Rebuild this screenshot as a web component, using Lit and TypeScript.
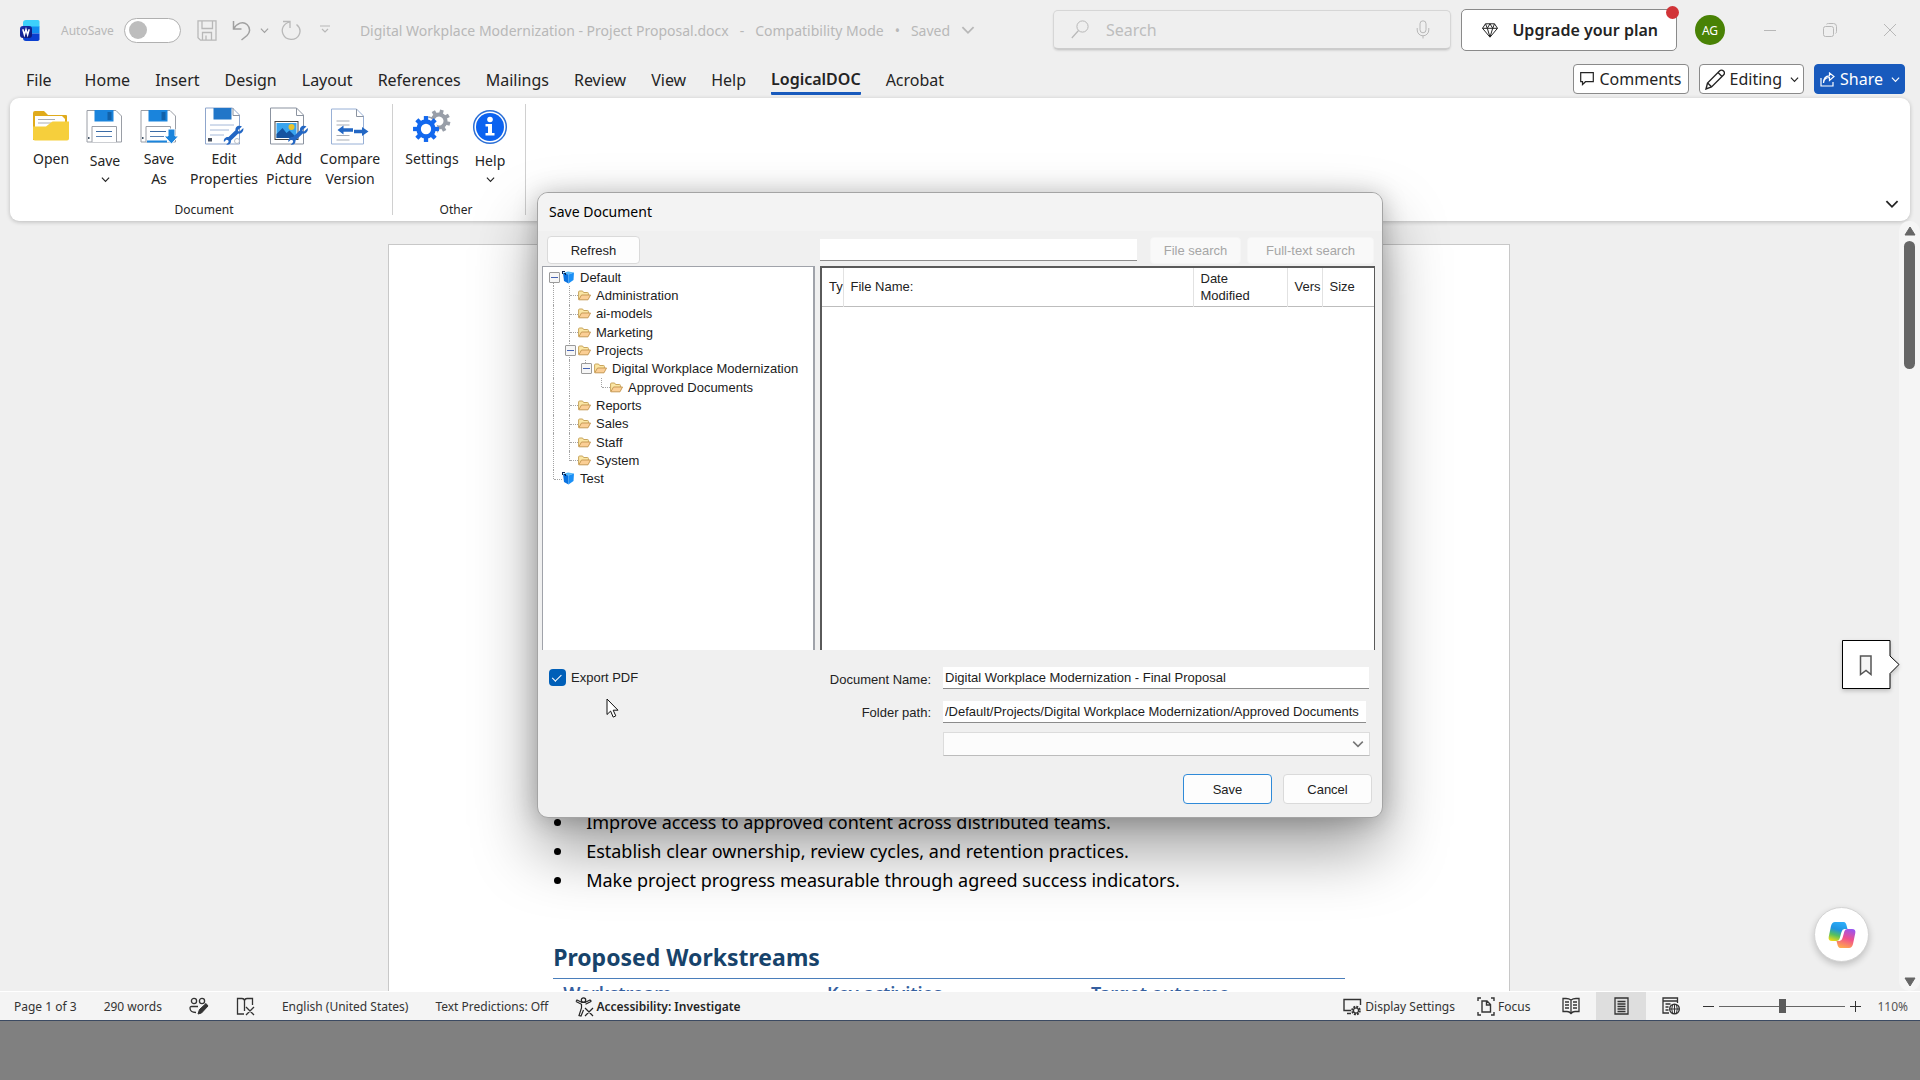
import { LitElement, html, css, svg, nothing, TemplateResult } from "lit";
import { customElement } from "lit/decorators.js";
import { classMap } from "lit/directives/class-map.js";

const chevron = (size = 10) => html`<svg class="chev" width=${size} height=${size} viewBox="0 0 10 10" aria-hidden="true">
  <path d="M1 3 L5 7 L9 3" fill="none" stroke="currentColor" stroke-width="1.3" /></svg>`;

const icon = (w: number, h: number, body: TemplateResult | unknown) => html`<svg
  width=${w} height=${h} viewBox="0 0 ${w} ${h}" fill="none" stroke="currentColor" aria-hidden="true">${body}</svg>`;

const wordLogo = icon(20, 21, svg`
  <defs><linearGradient id="wb" x1="0" y1="0" x2="1" y2="1"><stop offset="0" stop-color="#1a2fb0"/><stop offset="1" stop-color="#0b1673"/></linearGradient></defs>
  <g stroke="none"><path d="M3 3a3 3 0 0 1 3-3h12a1.500 1.500 0 0 1 1.500 1.500V7H3z" fill="#3dd0fb"/>
  <path d="M3 10a3.500 3.500 0 0 1 3.500-3.500h13v7H3z" fill="#118df0"/>
  <path d="M3 17a3.500 3.500 0 0 1 3.500-3.500h13v5A2 2 0 0 1 17.500 21H6a3 3 0 0 1-3-3z" fill="#0a3fd0"/>
  <rect x="0" y="6" width="12" height="12" rx="3" fill="url(#wb)"/></g>
  <path d="M2.800 9.200l1.600 5.600L6 9.600l1.600 5.200 1.600-5.600" stroke="#fff" stroke-width="1.500"/>`);

const saveIcon = icon(20, 21, svg`<path d="M1 .8h18v19.400H3.500L1 17.700zM5 1v7.500h10.500V1M5.500 20v-7.500h9V20M9 20v-4.500" stroke-width="1.300"/>`);
const undoIcon = icon(20, 21, svg`<path d="M1.500 1v8h8M1.500 9C5 3 11 .8 15 4.500s3 8 0 11L9.500 20" stroke-width="1.500"/>`);
const redoIcon = icon(21, 21, svg`<path d="M2 1.500h7v6.500M8.500 2C2 4 0 9.500 2 14c3 7 13 7 16 1 2-4 .5-8-2.500-10.500" stroke-width="1.300"/>`);
const customIcon = icon(10, 10, svg`<path d="M0 1h10M2 4l3 3 3-3" stroke-width="1.200"/>`);
const searchIcon = icon(18, 19, svg`<circle cx="11.500" cy="6.500" r="5.600"/><path d="M7.500 10.500L.8 18" stroke-width="1.200"/>`);
const micIcon = icon(14, 19, svg`<rect x="4" y=".8" width="6" height="12" rx="3"/><path d="M1.200 8v2a5.800 5.800 0 0 0 11.600 0V8M7 15.800V18.500"/>`);
const gemIcon = icon(16, 15, svg`<path d="M3.500.8h9l3 4.500L8 14.200.5 5.300zM.5 5.300h15M3.500.8L5.300 5.300 8 14l2.700-8.700L12.500.8M8 .8L5.300 5.300M8 .8l2.700 4.500"/>`);
const minIcon = icon(14, 14, svg`<path d="M1 7.500h12"/>`);
const restoreIcon = icon(14, 14, svg`<rect x=".5" y="3.500" width="10" height="10" rx="2"/><path d="M3.500 1.200Q4 .5 5.500.5h5a3 3 0 0 1 3 3v5q0 1.500-1 2"/>`);
const closeIcon = icon(14, 14, svg`<path d="M1 1l12 12M13 1L1 13"/>`);
const commentIcon = icon(14, 14, svg`<path d="M.7.7h12.600v9H5.500L2.500 12.500V9.700H.7z" stroke-width="1.200"/>`);
const pencilIcon = icon(20, 21, svg`<path d="M1 20l1.500-6L14.500 2a2.600 2.600 0 0 1 4 4L6.500 18zM13 3.500l4 4M2.700 14l4 4" stroke-width="1.400"/>`);
const shareIcon = icon(15, 15, svg`<path d="M1 6v8h12v-4M3.500 11C4 7 6 5.500 9.500 5.500V8.500L14 4.500 9.500 1v2.800C5.500 4 3.500 7 3.500 11z" stroke-width="1.200"/>`);

const wrench = (x: number, y: number) => svg`<g transform="translate(${x} ${y})" stroke="none"><path d="M18.500 1.500l-4 3.500.3 1.200 1.200.3L19.800 3c.6 3-1.500 6-5 5.600L7.500 15.500c.4 3-2 4.800-4.800 4.200L5.200 17l-.5-1.800-1.900-.4L.5 17c-.8-3 1.500-5.500 4.500-5L12 5.200c-.5-3.500 3-5.700 6.500-3.700z" fill="#2367c4"/></g>`;

const openPic = icon(38, 38, svg`<g stroke="none"><path d="M1 5q0-2 2-2h9l4 4h18q1 0 1 1v24H1z" fill="#e0ab1c"/>
  <path d="M3 8h27l3 3v8H3z" fill="#fff"/><path d="M6 11.500h17M6 15h13" stroke="#a9adb3" stroke-width="1.200"/>
  <path d="M1 18.500h13l5-4q1-1 2-1h16v17q0 2-2 2H3q-2 0-2-2z" fill="#f6cf3c"/></g>`);
const floppy = svg`<path d="M1 2.500h29l5.500 5.500v26h-34.500z" fill="#fff" stroke="#9a9ea6"/><rect x="8.500" y="2" width="19" height="11.500" fill="#1a84dc" stroke="none"/><rect x="21.500" y="4" width="4" height="8" fill="#1261a8" stroke="none"/>
  <path d="M6 34V18.500h24.500V34" fill="#fff" stroke="#9a9ea6"/><path d="M10 23.500h16" stroke="#3a6ba6"/><path d="M10 28.500h16" stroke="#5680b4"/><rect x="2" y="29" width="1.500" height="2" fill="#456" stroke="none"/>`;
const savePic = icon(38, 38, floppy);
const saveAsPic = icon(38, 38, svg`${floppy}<path d="M7 33.500h20" stroke="#1a84dc" stroke-width="2"/><path d="M28 21h7v7h3.500L31.500 36 24 28h4z" fill="#1a84dc" stroke="#fff"/>`);
const sheet = svg`<path d="M1.500 1h26l7 7v29h-33z" fill="#fff" stroke="#8b93a0"/><path d="M27.500 1v7.500h7" stroke="#8b93a0"/>`;
const editPic = icon(40, 40, svg`<path d="M1.500 1h27l7 7v29h-34z" fill="#fff" stroke="#8fa6cc"/><path d="M29 1v7.500h6.500" stroke="#8b93a0"/><rect x="9.500" y="1" width="18" height="11.500" fill="#2176c8" stroke="none"/>
  <path d="M6 18h24M6 23h19M6 28h14" stroke="#a4b8d8"/><rect x="4" y="31" width="4" height="3.500" fill="#4b5360" stroke="none"/><circle cx="33" cy="34" r="2.500" stroke="#b9bfc8"/>${wrench(19.500, 18)}`);
const addPic = icon(40, 40, svg`${sheet}<rect x="6" y="14.500" width="23" height="18" fill="#fff" stroke="#444"/><rect x="7.500" y="16" width="20" height="15" fill="#38a4ee" stroke="none"/><circle cx="22.500" cy="20" r="3" fill="#e9c32c" stroke="none"/>
  <path d="M7.500 31V27l6-6 4 5 3-2.500 7 7V31z" fill="#1553a0" stroke="none"/>${wrench(19, 18)}`);
const comparePic = icon(40, 40, svg`<path d="M1.500 2h25l7 7v28h-32z" fill="#fff" stroke="#98b0d6"/><path d="M26.500 2v7.500h7" stroke="#8b93a0"/>
  <path d="M6.500 14h13M6.500 18h13M6.500 28.500h13M6.500 33h13" stroke="#a8adb6"/><path d="M7.500 23l6-4.500v2.800H23v3.400h-9.500v2.800z" fill="#2367c4" stroke="none"/><path d="M38.500 24.500L32 20v2.800h-8v3.400h8V29z" fill="#2367c4" stroke="none"/>`);
const gear = (cx: number, cy: number, r: number, color: string, rot: number) => svg`<g transform="translate(${cx} ${cy}) rotate(${rot})">
  <circle r=${r * 0.62} stroke=${color} stroke-width=${r * 0.38}/>
  ${[0, 45, 90, 135, 180, 225, 270, 315].map((a) => svg`<rect x=${-r * 0.18} y=${-r * 1.08} width=${r * 0.36} height=${r * 0.36} fill=${color} stroke="none" transform="rotate(${a})"/>`)}</g>`;
const settingsPic = icon(40, 38, svg`${gear(27, 13, 10.500, "#989ea8", 15)}<circle cx="14" cy="21" r="11.500" fill="#fff" stroke="none"/>${gear(14, 21, 12, "#1268ee", 0)}`);
const helpPic = icon(36, 36, svg`<circle cx="18" cy="18" r="16.300" fill="#fff" stroke="#2b6fd6" stroke-width="1.500"/><circle cx="18" cy="18" r="14" fill="#0b62f0" stroke="none"/>
  <circle cx="18" cy="10.500" r="2.800" fill="#fff" stroke="none"/><path d="M13.500 15h6.500v9h2.500v2.500h-9V24H16v-6.500h-2.500z" fill="#fff" stroke="none"/>`);

const proofIcon = icon(20, 20, svg`<circle cx="5" cy="4" r="2.600" stroke-width="1.300"/><circle cx="13" cy="4" r="2.600" stroke-width="1.300"/><path d="M9 9.500H2.500q-1.500 0-1.500 1.500c0 3 2 4.500 6 4.500" stroke-width="1.300"/><path d="M9 17l1.500-4.500 6.500-6 2 2.500-6.500 7z" fill="currentColor"/>`);
const bookXIcon = icon(19, 19, svg`<path d="M8 17H1.500V1.500H6q2 0 2.500 2V14M8.500 3.500q.5-2 2.500-2h5.500V8M10 10l8 8M18 10l-8 8" stroke-width="1.300"/>`);
const a11yIcon = icon(19, 20, svg`<circle cx="8.500" cy="3" r="2.200" stroke-width="1.300"/><path d="M1 4.500l5.500 2.800V11L4 18.500 6 19l2.500-6M16 4.500l-5.500 2.800M1 4.500L2 3l5 2.500h3L15 3l1.500 1.500M10 11l8 8M18 11l-8 8" stroke-width="1.200"/>`);
const displayIcon = icon(19, 19, svg`<path d="M8 13.500H1v-11h16.500V8M4 16.500h4" stroke-width="1.400"/><circle cx="13" cy="13.500" r="3.600" stroke-width="2.400" stroke-dasharray="1.800 1"/><circle cx="13" cy="13.500" r="2.500" stroke-width="1.200"/>`);
const focusIcon = icon(18, 19, svg`<path d="M4 1H1v3M14 1h3v3M4 18H1v-3M14 18h3v-3M5 4h5l3.500 3.500V15H5zM9.500 4v4h4" stroke-width="1.400"/>`);
const readIcon = icon(18, 18, svg`<path d="M9 3Q7 1.500 4 1.500H1v13h4q2.500 0 4 2 1.500-2 4-2h4v-13h-3Q11 1.500 9 3zM9 3v13M3 5h4M3 8h4M3 11h4M11 5h4M11 8h4M11 11h4" stroke-width="1.300"/>`);
const printIcon = icon(15, 18, svg`<path d="M1 1h13v16H1zM3.500 4.500h8M3.500 7h8M3.500 9.500h8M3.500 12h8M3.500 14.500h8" stroke-width="1.300"/>`);
const webIcon = icon(18, 18, svg`<path d="M7 16H1V1h14.500v5M1 4h14M3.500 7h5M3.500 10h3M3.500 13h3" stroke-width="1.300"/><circle cx="12.500" cy="12" r="4.800" stroke-width="1.400"/><path d="M8 12h9M12.500 7v10M10.500 8q-1.500 4 0 8M14.500 8q1.500 4 0 8"/>`);
const bookmarkIcon = icon(14, 21, svg`<path d="M1.500 1h10.500v18.500L7 15.500l-5.500 4z" fill="#f6f6f6" stroke="#555" stroke-width="1.500"/>`);
const copilotIcon = icon(28, 26, svg`<defs>
  <linearGradient id="ca" x1="0.600" y1="0" x2="0.300" y2="1"><stop offset="0" stop-color="#2cacf8"/><stop offset=".4" stop-color="#1f94e0"/><stop offset=".7" stop-color="#55c060"/><stop offset="1" stop-color="#e8d81c"/></linearGradient>
  <linearGradient id="cb" x1="0.600" y1="0" x2="0.300" y2="1"><stop offset="0" stop-color="#ffa650"/><stop offset=".5" stop-color="#f0508c"/><stop offset="1" stop-color="#9a55f0"/></linearGradient></defs>
  <g stroke="none"><path d="M7 0h8.500c2 0 2.800 2 3.200 4l.8 3h-3q-2.200 0-3 3l-2 7q-.7 2-3 2H4Q0 19 .7 15L3 4Q4 0 7 0z" fill="url(#ca)"/>
  <path transform="rotate(180 14 13)" d="M7 0h8.500c2 0 2.800 2 3.200 4l.8 3h-3q-2.200 0-3 3l-2 7q-.7 2-3 2H4Q0 19 .7 15L3 4Q4 0 7 0z" fill="url(#cb)"/></g>`);
const cubeIcon = icon(13, 13, svg`<g stroke="none"><path d="M1 2l5-1.500L12 1.500 6.500 3.500z" fill="#55b8f8"/><path d="M1 2l5.500 1.500V12.500L2 10z" fill="#0a72e0"/><path d="M12 1.500L6.500 3.500v9L11.500 9z" fill="#1b90f6"/><path d="M0 0h3v1H1v2H0zM2 2h2v2H3V3H2z" fill="#0b2450"/></g>`);
const folderIcon = icon(13, 11, svg`<path d="M.6 9.500V2q0-1 1-1h3l1 1.500h4q.8 0 .8 1V5" fill="#fbe6a4" stroke="#c9a55c"/><path d="M.8 9.800L3.500 5h9L10 9.800z" fill="#fbcf96" stroke="#c79a56"/>`);
const cursorIcon = icon(14, 21, svg`<path d="M1 1v15.500l3.600-3.400 2.600 6 2.600-1.200-2.600-5.700H12z" fill="#fff" stroke="#111"/>`);

interface Tool { label: string[]; pic: TemplateResult; size: string; menu?: boolean }
interface Group { name: string; tools: Tool[] }

const groups: Group[] = [
  { name: "Document", tools: [
    { label: ["Open"], pic: openPic, size: "s" },
    { label: ["Save"], pic: savePic, size: "s", menu: true },
    { label: ["Save", "As"], pic: saveAsPic, size: "s" },
    { label: ["Edit", "Properties"], pic: editPic, size: "l" },
    { label: ["Add", "Picture"], pic: addPic, size: "s" },
    { label: ["Compare", "Version"], pic: comparePic, size: "m" },
  ] },
  { name: "Other", tools: [
    { label: ["Settings"], pic: settingsPic, size: "m" },
    { label: ["Help"], pic: helpPic, size: "xs", menu: true },
  ] },
];

const tabs = ["File", "Home", "Insert", "Design", "Layout", "References", "Mailings", "Review", "View", "Help", "LogicalDOC", "Acrobat"];

/* Guide cells per row: v = line, t = tee, l = corner, b = box, e = empty */
interface Node { name: string; guides: string[]; root?: boolean }
const tree: Node[] = [
  { name: "Default", guides: ["b first"], root: true },
  { name: "Administration", guides: ["v", "t"] },
  { name: "ai-models", guides: ["v", "t"] },
  { name: "Marketing", guides: ["v", "t"] },
  { name: "Projects", guides: ["v", "b"] },
  { name: "Digital Workplace Modernization", guides: ["v", "v", "b last"] },
  { name: "Approved Documents", guides: ["v", "v", "e", "l"] },
  { name: "Reports", guides: ["v", "t"] },
  { name: "Sales", guides: ["v", "t"] },
  { name: "Staff", guides: ["v", "t"] },
  { name: "System", guides: ["v", "l"] },
  { name: "Test", guides: ["l"], root: true },
];

const reset = css`
  * { box-sizing: border-box; }
  button, input, select { font: inherit; color: inherit; margin: 0; padding: 0; border: 0; background: none; }
  svg { display: block; flex: none; }
  ul { list-style: none; margin: 0; padding: 0; }
`;

@customElement("word-header")
class WordHeader extends LitElement {
  static styles = [reset, css`
    :host { display: block; color: #242424; font-size: 16px; }
    .title { display: flex; align-items: center; height: 60px; padding: 0 23px 0 20px; color: #b8b8b8; font-size: 14px; }
    .auto { display: flex; align-items: center; gap: 10px; margin-left: 21px; font-size: 12px; }
    .toggle { appearance: none; width: 57px; height: 25px; border: 1px solid #b0b0b0; border-radius: 13px; background: #fff; display: flex; align-items: center; padding-left: 4px; }
    .toggle::before { content: ""; width: 18px; height: 18px; border-radius: 50%; background: #bdbdbd; }
    .quick { display: flex; align-items: center; margin-left: 16px; }
    .quick button { display: flex; align-items: center; }
    .undo { margin-left: 15px; gap: 8px; color: #a0a0a0; }
    .redo { margin-left: 12px; }
    .custom { margin-left: 18px; }
    .doc { display: flex; align-items: center; gap: 11px; margin-left: 30px; white-space: pre; }
    .saved { display: flex; align-items: center; gap: 7px; }
    .search { display: flex; align-items: center; width: 398px; height: 40px; margin-left: auto; padding: 0 20px 0 17px; border: 1px solid #d6d6d6; border-bottom: 2px solid #cccccc; border-radius: 5px; font-size: 16px; box-shadow: 0 1px 2px #0000001a; }
    .search input { flex: 1; min-width: 0; margin-left: 17px; outline: none; }
    .search input::placeholder { color: #bdbdbd; }
    .upgrade { position: relative; display: flex; align-items: center; justify-content: space-between; width: 216px; height: 42px; margin-left: 10px; padding: 0 18px 0 20px; border: 1px solid #8a8a8a; border-radius: 5px; background: #fff; color: #242424; font-size: 16px; font-weight: 600; }
    .dot { position: absolute; right: -3px; top: -4px; width: 13px; height: 13px; border-radius: 50%; background: #d13438; }
    .avatar { width: 30px; height: 30px; margin-left: 18px; border-radius: 50%; background: #498205; color: #fff; font-size: 12px; }
    .win { display: flex; gap: 46px; margin-left: 38px; }
    .nav { display: flex; align-items: center; height: 38px; padding: 0 15px 0 13px; }
    .tabs { display: flex; }
    .tabs button { height: 32px; padding: 2px 12px 0 13px; }
    .tabs button:first-child { margin-right: 8px; }
    .tabs .on { font-weight: 600; }
    .tabs .on span { display: block; height: 29px; padding-top: 2px; border-bottom: 3px solid #185abd; border-radius: 1px; }
    .acts { display: flex; gap: 10px; margin-left: auto; }
    .acts button { display: flex; align-items: center; height: 30px; padding: 0 6px; gap: 5px; border: 1px solid #8a8a8a; border-radius: 4px; background: #fff; }
    .acts .edit { padding: 0 4px 0 5px; }
    .acts .share { background: #185abd; border-color: #185abd; color: #fff; padding: 0 4px 0 5px; }
    .acts .chev { margin-left: 3px; }
    .ribbon { display: flex; margin: 0 10px; height: 123px; background: #fff; border-radius: 9px; box-shadow: 0 1px 4px #00000038; padding-right: 11px; }
    .group { display: flex; flex-direction: column; margin: 6px 0; padding: 0 8px 0 14px; border-right: 1px solid #d0d0d0; }
    .group + .group { padding: 0 11px 0 5px; }
    .tools { display: flex; flex: 1; }
    .tools button { display: flex; flex-direction: column; align-items: center; padding-top: 4px; font-size: 14px; line-height: 20px; }
    .pic { height: 38px; display: flex; align-items: center; margin-bottom: 3px; }
    .xs { width: 48px; } .s { width: 54px; } .m { width: 68px; } .l { width: 76px; }
    .menu .pic { margin-bottom: 5px; }
    .menu .chev { margin-top: 4px; }
    .name { text-align: center; font-size: 12px; line-height: 20px; margin-bottom: -5px; height: 20px; }
    .fold { margin: auto 0 10px auto; }
  `];
  render() {
    return html`
      <div class="title">
        ${wordLogo}
        <label class="auto">AutoSave <input class="toggle" type="checkbox" role="switch" /></label>
        <div class="quick">
          <button aria-label="Save">${saveIcon}</button>
          <button class="undo" aria-label="Undo">${undoIcon}${chevron(9)}</button>
          <button class="redo" aria-label="Redo">${redoIcon}</button>
          <button class="custom" aria-label="Customize toolbar">${customIcon}</button>
        </div>
        <div class="doc"><span>Digital Workplace Modernization - Project Proposal.docx</span><span>-</span><span>Compatibility Mode</span><span>•</span><button class="saved">Saved ${chevron(14)}</button></div>
        <label class="search">${searchIcon}<input type="search" placeholder="Search" aria-label="Search" />${micIcon}</label>
        <button class="upgrade">${gemIcon}Upgrade your plan<span class="dot"></span></button>
        <button class="avatar">AG</button>
        <div class="win"><button aria-label="Minimize">${minIcon}</button><button aria-label="Restore">${restoreIcon}</button><button aria-label="Close">${closeIcon}</button></div>
      </div>
      <div class="nav">
        <div class="tabs" role="tablist">${tabs.map((t) => html`<button role="tab" class=${classMap({ on: t === "LogicalDOC" })}><span>${t}</span></button>`)}</div>
        <div class="acts">
          <button>${commentIcon}Comments</button>
          <button class="edit">${pencilIcon}Editing ${chevron(9)}</button>
          <button class="share">${shareIcon}Share ${chevron(9)}</button>
        </div>
      </div>
      <div class="ribbon">
        ${groups.map((g) => html`<section class="group">
          <div class="tools">${g.tools.map((t) => html`<button class="${t.size} ${t.menu ? "menu" : ""}">
            <span class="pic">${t.pic}</span>${t.label.map((l) => html`<span>${l}</span>`)}${t.menu ? chevron(9) : nothing}</button>`)}</div>
          <div class="name">${g.name}</div>
        </section>`)}
        <button class="fold" aria-label="Collapse ribbon">${chevron(14)}</button>
      </div>`;
  }
}

@customElement("document-view")
class DocumentView extends LitElement {
  static styles = [reset, css`
    :host { display: flex; flex: 1; min-height: 0; overflow: hidden; position: relative; }
    .canvas { flex: 1; display: flex; justify-content: center; padding: 23px 1px 0 0; }
    .page { width: 59.1%; background: #fff; border: 1px solid #c8c8c8; border-bottom: 0; padding: 563px 164px 0; overflow: hidden; color: #000; }
    .points { font-family: "Noto Sans", sans-serif; font-size: 18px; line-height: 29px; white-space: nowrap; }
    .points li { display: flex; align-items: center; }
    .points li::before { content: ""; width: 7px; height: 7px; margin: 0 25px 0 1px; border-radius: 50%; background: #000; }
    h2 { margin: 44px 0 3px; color: #17436b; font-size: 23px; line-height: 36px; font-weight: 700; }
    table { width: 100%; border-collapse: collapse; table-layout: fixed; border-top: 1px solid #4a7ebb; color: #365f9f; font-size: 18px; line-height: 28px; }
    th { text-align: left; padding: 0 10px; font-weight: 600; }
    .scroll { display: flex; flex-direction: column; align-items: center; width: 21px; padding: 5px 0 4px; background: #f5f5f5; border-radius: 10px; }
    .bar { width: 11px; height: 128px; margin: 5px 0 auto; border-radius: 6px; background: #666; }
    .pin { position: absolute; right: 20px; top: 419px; display: flex; align-items: center; filter: drop-shadow(0 2px 2px #0003); }
    .copilot { position: absolute; right: 51px; bottom: 29px; width: 55px; height: 55px; display: grid; place-items: center; border: 1px solid #d4d4d4; border-radius: 50%; background: #fff; box-shadow: 0 3px 7px #0003; }
    .pin .mark { position: absolute; left: 17px; }
  `];
  render() {
    return html`
      <div class="canvas"><article class="page">
        <ul class="points">
          <li>Improve access to approved content across distributed teams.</li>
          <li>Establish clear ownership, review cycles, and retention practices.</li>
          <li>Make project progress measurable through agreed success indicators.</li>
        </ul>
        <h2>Proposed Workstreams</h2>
        <table><thead><tr><th>Workstream</th><th>Key activities</th><th>Target outcome</th></tr></thead></table>
      </article></div>
      <div class="scroll">
        ${icon(12, 10, svg`<path d="M6 1l5 8H1z" fill="#666" stroke="#666"/>`)}
        <div class="bar"></div>
        ${icon(12, 10, svg`<path d="M6 9l5-8H1z" fill="#666" stroke="#666"/>`)}
      </div>
      <button class="pin" aria-label="Bookmark">
        ${icon(58, 50, svg`<path d="M.5.5h47.500V16l9 8.500-9 9V48.500H.5z" fill="#fff" stroke="#000"/>`)}
        <span class="mark">${bookmarkIcon}</span>
      </button>
      <button class="copilot" aria-label="Copilot">${copilotIcon}</button>`;
  }
}

@customElement("status-bar")
class StatusBar extends LitElement {
  static styles = [reset, css`
    :host { display: flex; align-items: stretch; justify-content: space-between; height: 28px; padding: 0 12px 0 14px; border-top: 1px solid #fff; border-bottom: 1px solid #3b4a62; background: #f4f4f4; color: #333; font-size: 12px; }
    .side, button { display: flex; align-items: center; }
    .left { gap: 27px; padding-top: 1px; }
    .left button { gap: 2px; }
    .bold { font-weight: 600; color: #242424; }
    .opts { display: flex; gap: 22px; margin-right: 16px; padding-top: 1px; }
    .opts button { gap: 3px; }
    .view { justify-content: center; width: 50px; align-self: stretch; }
    .on { background: #dedede; }
    .zoom { gap: 5px; margin-left: 7px; }
    input { appearance: none; width: 126px; height: 14px; background: linear-gradient(#666, #666) center / 100% 1px no-repeat; }
    input::-webkit-slider-thumb { appearance: none; width: 7px; height: 14px; background: #5c5c5c; }
    output { margin-left: 11px; padding-top: 1px; color: #555; }
  `];
  render() {
    return html`
      <div class="side left">
        <button>Page 1 of 3</button><button>290 words</button><button aria-label="Editor">${proofIcon}</button><button aria-label="Proofing">${bookXIcon}</button>
        <button>English (United States)</button><button>Text Predictions: Off</button><button class="bold">${a11yIcon}Accessibility: Investigate</button>
      </div>
      <div class="side">
        <div class="opts"><button>${displayIcon}Display Settings</button><button>${focusIcon}Focus</button></div>
        <button class="view" aria-label="Read mode">${readIcon}</button><button class="view on" aria-label="Print layout">${printIcon}</button><button class="view" aria-label="Web layout">${webIcon}</button>
        <div class="side zoom">
          <button aria-label="Zoom out">${icon(11, 11, svg`<path d="M0 5.500h11"/>`)}</button>
          <input type="range" min="10" max="210" value="110" aria-label="Zoom" />
          <button aria-label="Zoom in">${icon(11, 11, svg`<path d="M0 5.500h11M5.500 0v11"/>`)}</button>
          <output>110%</output>
        </div>
      </div>`;
  }
}

@customElement("save-dialog")
class SaveDialog extends LitElement {
  static styles = [reset, css`
    :host { position: relative; display: flex; flex-direction: column; width: 844px; padding-bottom: 13px; border: 1px solid #a4a4a4; border-radius: 11px; background: #f0f0f0; overflow: hidden; color: #222; font-family: "Liberation Sans", Arial, sans-serif; font-size: 13px; }
    h1 { margin: 0; height: 38px; padding: 0 11px; background: #f3f3f3; color: #000; font-family: "Noto Sans", sans-serif; font-size: 14px; font-weight: 400; line-height: 38px; }
    button { background: #fdfdfd; border: 1px solid #dadada; border-radius: 4px; }
    .panes { display: grid; grid-template-columns: 273px 1fr; column-gap: 5px; padding: 5px 7px 0 4px; }
    .bar { display: flex; align-items: center; height: 28px; margin-bottom: 2px; }
    .refresh { width: 93px; height: 28px; margin-left: 5px; }
    .query { flex: 1; min-width: 0; height: 22px; margin: 0 13px 0 0; background: #fff; border-bottom: 1px solid #8c8c8c; padding: 0 3px; }
    .bar button:disabled { height: 27px; color: #a6a6a6; background: #f9f9f9; border-color: #f5f5f5; }
    .fs { width: 91px; } .ft { width: 127px; margin: 0 1px 0 6px; }
    .tree { height: 384px; border: 1px solid #a0a3aa; border-width: 1px 2px 0 1px; background: #fff; padding: 1px 3px; }
    .tree ul { display: grid; grid-auto-rows: 1fr; height: 220px; }
    .tree li { display: flex; align-items: center; color: #1c1c1c; }
    .g { position: relative; width: 16px; align-self: stretch; display: flex; align-items: center; justify-content: center; }
    .v::before, .t::before, .l::before, .b::before { content: ""; position: absolute; left: 7px; top: 0; bottom: 0; border-left: 1px dotted #a4a4a4; }
    .l::before, .last::before { bottom: 50%; }
    .first::before { top: 50%; }
    .t::after, .l::after { content: ""; position: absolute; left: 8px; right: 0; top: 50%; border-top: 1px dotted #a4a4a4; }
    .g button { position: relative; width: 11px; height: 11px; border: 1px solid #9a9a9a; border-radius: 1px; background: linear-gradient(#4664b4, #4664b4) center / 7px 1px no-repeat #f6f6f6; }
    .cap { margin-left: 5px; white-space: nowrap; }
    .files { border: 2px solid #5a5a5a; border-width: 2px 1px 0 2px; background: #fff; height: 384px; }
    table { width: 100%; border-collapse: collapse; table-layout: fixed; border-bottom: 1px solid #bdbdbd; }
    th { height: 38px; padding: 0 0 0 7px; overflow: hidden; text-align: left; font-weight: 400; line-height: 17px; border-left: 1px solid #e2e2e2; }
    th:first-child { border-left: 0; }
    .c1 { width: 21px; } .c3 { width: 94px; } .c4 { width: 35px; } .c5 { width: 52px; }
    .foot { display: grid; grid-template-columns: 1fr 115px 427px; padding: 17px 12px 0 11px; align-items: start; }
    .export { display: flex; align-items: center; gap: 5px; height: 20px; }
    .check { appearance: none; width: 17px; height: 17px; border-radius: 4px; background: #005fb8; display: grid; place-items: center; }
    .check::before { content: ""; width: 8px; height: 4px; border: 1px solid #fff; border-width: 0 0 1px 1px; transform: rotate(-45deg) translate(0, -1px); }
    .caps { display: flex; flex-direction: column; gap: 13px; text-align: right; padding: 3px 12px 0 0; white-space: nowrap; }
    .caps label { line-height: 20px; }
    .fields { display: flex; flex-direction: column; align-items: flex-start; gap: 12px; }
    .fields input { width: 426px; height: 22px; padding: 0 2px; background: #fff; border-bottom: 1px solid #8c8c8c; outline: none; color: #1c1c1c; }
    .fields .path { width: 423px; }
    .drop { position: relative; display: flex; align-items: center; width: 100%; margin-top: -3px; }
    .drop select { appearance: none; width: 100%; height: 24px; border: 1px solid #dcdcdc; border-bottom-color: #bcbcbc; background: #fcfcfc; }
    .drop svg { position: absolute; right: 6px; color: #777; }
    .acts { display: flex; justify-content: flex-end; gap: 11px; padding: 18px 10px 0; }
    .acts button { width: 89px; height: 30px; }
    .acts .ok { border-color: #2f8ad8; }
    .cursor { position: absolute; left: 68px; top: 505px; }
  `];
  render() {
    return html`
      <h1>Save Document</h1>
      <div class="panes">
        <div class="bar"><button class="refresh">Refresh</button></div>
        <div class="bar"><input class="query" aria-label="Query" /><button class="fs" disabled>File search</button><button class="ft" disabled>Full-text search</button></div>
        <div class="tree"><ul>${tree.map((n) => html`<li>
          ${n.guides.map((g) => html`<span class="g ${g}">${g[0] === "b" ? html`<button aria-label="Collapse ${n.name}"></button>` : nothing}</span>`)}
          ${n.root ? cubeIcon : folderIcon}<span class="cap">${n.name}</span></li>`)}</ul></div>
        <div class="files"><table>
          <thead><tr><th class="c1">Ty</th><th>File Name:</th><th class="c3">Date<br />Modified</th><th class="c4">Vers</th><th class="c5">Size</th></tr></thead>
        </table></div>
      </div>
      <div class="foot">
        <label class="export"><input class="check" type="checkbox" checked />Export PDF</label>
        <div class="caps"><label for="name">Document Name:</label><label for="path">Folder path:</label></div>
        <div class="fields">
          <input id="name" .value=${"Digital Workplace Modernization - Final Proposal"} />
          <input id="path" class="path" .value=${"/Default/Projects/Digital Workplace Modernization/Approved Documents"} />
          <div class="drop"><select aria-label="Template"></select>${chevron(12)}</div>
        </div>
      </div>
      <div class="acts"><button class="ok">Save</button><button>Cancel</button></div>
      <div class="cursor">${cursorIcon}</div>`;
  }
}

@customElement("app-root")
class AppRoot extends LitElement {
  static styles = css`
    :host { position: relative; display: flex; flex-direction: column; height: 100vh; background: #efefef; font-family: "Noto Sans", sans-serif; overflow: hidden; }
    .desk { height: 59px; background: #808080; }
    .layer { position: absolute; inset: 0; display: flex; justify-content: center; align-items: flex-start; padding-top: 192px; clip-path: inset(0 0 60px 0); }
    save-dialog { box-shadow: 0 32px 64px #00000060, 0 2px 24px #00000038; }
  `;
  render() {
    return html`<word-header></word-header><document-view></document-view><status-bar></status-bar><div class="desk"></div>
      <div class="layer"><save-dialog></save-dialog></div>`;
  }
}
